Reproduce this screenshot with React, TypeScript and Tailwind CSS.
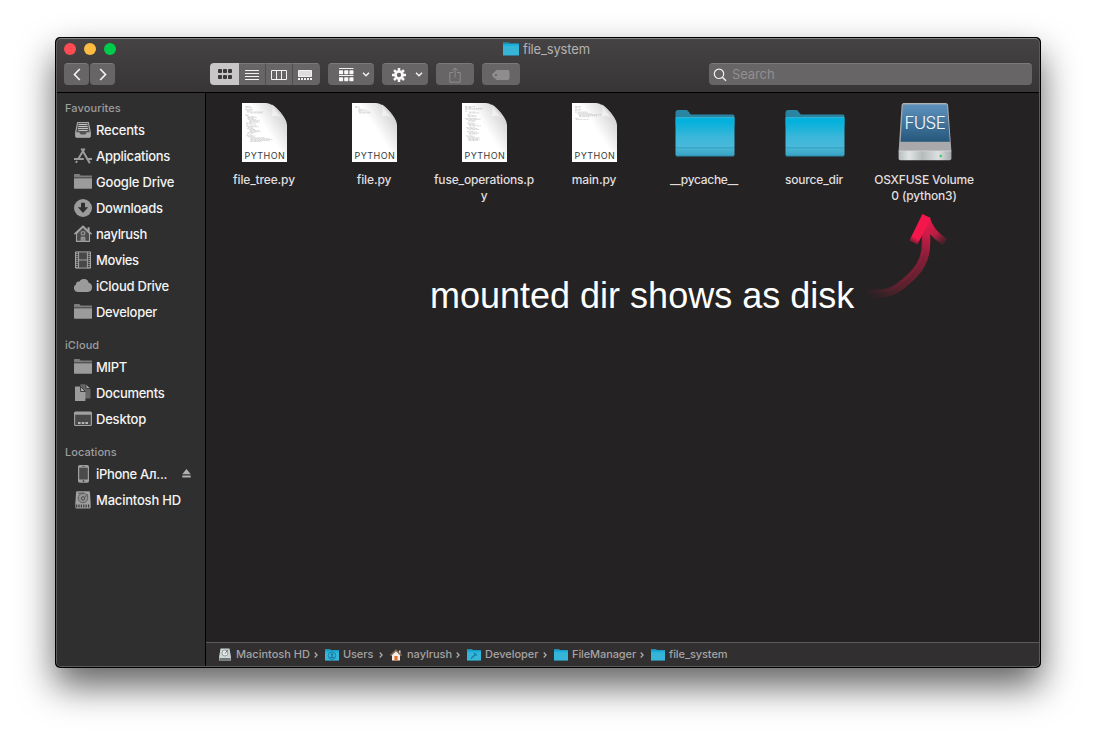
import type { ReactNode } from "react";

const GREY = "#9b9b9b";

function SmallFolder({ glyph, className = "h-[14px] w-[14px]" }: { glyph?: "user" | "tool"; className?: string }) {
  return (
    <svg viewBox="0 0 14 14" preserveAspectRatio="none" className={className}>
      <path d="M0 1h5l1 1h8V12.600H0z" fill="#258ba9" />
      <path d="M0 3h14V12.400H0z" fill="#36b5d9" />
      <path d="M0 2.600h14v1.800H0z" fill="#17b0df" />
      {glyph === "user" && (
        <g stroke="#157fa4" fill="none">
          <circle cx="7" cy="7.600" r="3.800" strokeWidth=".9" />
          <circle cx="7" cy="6.600" r="1.400" fill="#157fa4" stroke="none" />
          <path d="M4.500 10.200c.6-1.800 4.400-1.800 5 0" fill="#157fa4" />
        </g>
      )}
      {glyph === "tool" && <path d="M4 10.600l5-4.600M7 5l3 2.500" stroke="#157fa4" strokeWidth="1.300" fill="none" />}
    </svg>
  );
}

function SideFolder() {
  return (
    <svg viewBox="0 0 18 18" className="h-[18px] w-[18px]">
      <path d="M0 1.600q0-.6.6-.6H5.400l1.200 1.500H17.400q.6 0 .6.600V4.400H0z" fill="#7d7d7d" />
      <path d="M0 5.200h18v9.900q0 .6-.6.6H.6q-.6 0-.6-.6z" fill={GREY} />
    </svg>
  );
}

const icons: Record<string, ReactNode> = {
  recents: (
    <svg viewBox="0 0 18 18" className="h-[18px] w-[18px]">
      <path d="M3.600 1.500h10.800l1.900 9.600v4.200q0 .9-.9.9H2.600q-.9 0-.9-.9v-4.200z" fill="#555" stroke="#a8a8a8" strokeWidth="1.100" />
      <path d="M1.700 11.200h3.600q.6 2.200 2 2.200h3.400q1.400 0 2-2.200h3.600v4.100q0 .9-.9.9H2.600q-.9 0-.9-.9z" fill="#a8a8a8" />
      <path d="M4.600 3.500h8.800M4.300 5.500h9.400M4 7.500h10M4.500 9.500h9" stroke="#c0c0c0" strokeWidth="1" />
    </svg>
  ),
  apps: (
    <svg viewBox="0 0 18 18" className="h-[18px] w-[18px]" stroke={GREY} fill="none">
      <path d="M10.600 1.400L4.200 12M7.400 1.400L15 14.800M3 14l-1 1.900M15 14.800l.8 1.400" strokeWidth="2" />
      <path d="M0 12h9.800M12.600 12H18" strokeWidth="1.800" />
    </svg>
  ),
  folder: <SideFolder />,
  downloads: (
    <svg viewBox="0 0 18 18" className="h-[18px] w-[18px]">
      <circle cx="9" cy="9" r="9" fill={GREY} />
      <path d="M7 3.800h4v4.400h3.200L9 13.900 3.800 8.200H7z" fill="#303030" />
    </svg>
  ),
  home: (
    <svg viewBox="0 0 18 18" className="h-[18px] w-[18px]" fill="none" stroke="#a3a3a3">
      <path d="M2.500 8.500V16.400h13V8.500L9 2.200z" fill="#4a4a4a" strokeWidth="1.100" />
      <path d="M.4 9.200L9 1.300l8.600 7.900" strokeWidth="1.500" />
      <path d="M14.600 2.200v4" strokeWidth="2" />
      <path d="M7.300 6.800h3.400v3H7.300z" />
      <path d="M7 12h4v4.400H7z" fill="#8b8b8b" strokeWidth=".6" />
    </svg>
  ),
  movies: (
    <svg viewBox="0 0 18 18" className="h-[18px] w-[18px]">
      <path d="M1.500.9h15v16.200h-15z" fill="#484848" stroke="#a3a3a3" strokeWidth="1" />
      <path d="M4.600 1v16M13.400 1v16M4.600 9h8.800" stroke="#a3a3a3" strokeWidth="1" />
      <path d="M2.900 2v15M15.100 2v15" stroke="#a8a8a8" strokeWidth="1.200" strokeDasharray="1 1" />
    </svg>
  ),
  cloud: (
    <svg viewBox="0 0 18 18" className="h-[18px] w-[18px]">
      <path d="M4 15A4 4 0 0 1 2 7.500 3 3 0 0 1 5.400 4.600 4.700 4.700 0 0 1 14 5.600 4.400 4.400 0 0 1 18 10.600a4.400 4.400 0 0 1-4.200 4.400z" fill={GREY} />
      <circle cx="10.200" cy="6.400" r="4.400" fill={GREY} />
    </svg>
  ),
  documents: (
    <svg viewBox="0 0 18 18" className="h-[18px] w-[18px]">
      <path d="M6.400.3h5.400L16.500 4.500v10H6.400z" fill="#666" />
      <path d="M12 0v4.600h4.400z" fill="#a8a8a8" stroke="#303030" strokeWidth=".8" />
      <path d="M1 2.500h5.800l4.600 4.800v9.600H1z" fill={GREY} />
      <path d="M6.600 2.500v5h4.800z" fill="#b4b4b4" stroke="#303030" strokeWidth=".9" />
    </svg>
  ),
  desktop: (
    <svg viewBox="0 0 18 18" className="h-[18px] w-[18px]">
      <rect x=".6" y="2.100" width="16.800" height="13.400" rx="1" fill="#484848" stroke="#a3a3a3" strokeWidth="1.100" />
      <path d="M.6 2.200h16.800v2.500H.6z" fill="#a3a3a3" />
      <path d="M4 12h2.600v2H4zM7.700 12h2.600v2H7.700zM11.400 12H14v2h-2.600z" fill="#b4b4b4" />
    </svg>
  ),
  phone: (
    <svg viewBox="0 0 18 18" className="h-[18px] w-[18px]">
      <rect x="4" y=".1" width="11" height="17.600" rx="1.800" fill="#a0a0a0" />
      <path d="M5.200 2.700h8.600v11.800H5.200z" fill="#4b4b4b" />
      <circle cx="9.500" cy="16.100" r=".9" fill="#3a3a3a" />
      <path d="M7.900 1.400h3.200" stroke="#555" strokeWidth=".7" />
    </svg>
  ),
  disk: (
    <svg viewBox="0 0 18 18" className="h-[18px] w-[18px]">
      <path d="M3 .2h12q.8 0 .9.8l.8 11.700v3.900q0 .8-.8.8H2.100q-.8 0-.8-.8v-3.900L2.100 1Q2.200.2 3 .2z" fill="#a0a0a0" />
      <circle cx="9" cy="7" r="4.800" fill="#929292" stroke="#5a5a5a" strokeWidth=".9" />
      <circle cx="9" cy="7.400" r="1.700" fill="none" stroke="#4a4a4a" strokeWidth="1" />
      <path d="M10.400 6.500L14 3.200M4 2.200h6" stroke="#5a5a5a" strokeWidth="1" />
      <path d="M2.600 13.600v2.800M5 13.600v2.800M7.400 13.600v2.800M9.800 13.600v2.800M12.200 13.600v2.800M14.600 13.600v2.800" stroke="#404040" strokeWidth="1.300" />
    </svg>
  ),
};

type Item = { icon: string; label: string; track: string; eject?: boolean };
const sections: { title: string; track: string; items: Item[] }[] = [
  {
    title: "Favourites",
    track: "tracking-[0.1px]",
    items: [
      { icon: "recents", label: "Recents", track: "tracking-[-0.2px]" },
      { icon: "apps", label: "Applications", track: "tracking-[-0.26px]" },
      { icon: "folder", label: "Google Drive", track: "tracking-[-0.2px]" },
      { icon: "downloads", label: "Downloads", track: "tracking-[-0.3px]" },
      { icon: "home", label: "naylrush", track: "tracking-[-0.3px]" },
      { icon: "movies", label: "Movies", track: "tracking-[-0.35px]" },
      { icon: "cloud", label: "iCloud Drive", track: "tracking-[-0.25px]" },
      { icon: "folder", label: "Developer", track: "tracking-[-0.27px]" },
    ],
  },
  {
    title: "iCloud",
    track: "tracking-[0.1px]",
    items: [
      { icon: "folder", label: "MIPT", track: "tracking-[-0.3px]" },
      { icon: "documents", label: "Documents", track: "tracking-[-0.27px]" },
      { icon: "desktop", label: "Desktop", track: "tracking-[-0.2px]" },
    ],
  },
  {
    title: "Locations",
    track: "tracking-[0.05px]",
    items: [
      { icon: "phone", label: "iPhone Ал...", track: "tracking-[-0.3px]", eject: true },
      { icon: "disk", label: "Macintosh HD", track: "tracking-[-0.2px]" },
    ],
  },
];

function Sidebar() {
  return (
    <aside className="flex w-[150px] shrink-0 flex-col gap-[11px] border-r border-black bg-[#2f2f2f] pt-[6px]">
      {sections.map((s) => (
        <section key={s.title}>
          <h2 className={`h-[18px] pl-[9px] text-[11px] leading-[18px] font-medium text-[#9d9d9d] ${s.track}`}>{s.title}</h2>
          {s.items.map((i) => (
            <div key={i.label} className="flex h-[26px] items-center pl-[18px]">
              {icons[i.icon]}
              <span className={`ml-[4px] pt-[2px] whitespace-nowrap text-[13px] font-medium text-[#f4f4f4] ${i.track}`}>{i.label}</span>
              {i.eject && (
                <svg viewBox="0 0 9 9" className="mr-[14px] mb-px ml-auto h-[9px] w-[9px]">
                  <path d="M4.500 0L8.800 5.200H.2zM.3 6.600h8.400v1.900H.3z" fill="#b0b0b0" />
                </svg>
              )}
            </div>
          ))}
        </section>
      ))}
    </aside>
  );
}

const btn = "flex h-[22px] items-center justify-center border-t border-[#7b797a] bg-[#676566]";

function Chevron() {
  return (
    <svg viewBox="0 0 8 5" className="h-[5px] w-[8px]">
      <path d="M1 .8l3 3 3-3" fill="none" stroke="#f2f2f2" strokeWidth="1.500" />
    </svg>
  );
}

function Toolbar() {
  return (
    <div className="flex h-[22px] items-center">
      <div className="flex gap-px">
        <button className={`${btn} w-[25px] rounded-[4px]`}>
          <svg viewBox="0 0 8 13" className="h-[13px] w-[8px]">
            <path d="M6.800 1L1.500 6.500l5.300 5.500" fill="none" stroke="#f2f2f2" strokeWidth="1.700" />
          </svg>
        </button>
        <button className={`${btn} w-[25px] rounded-[4px]`}>
          <svg viewBox="0 0 8 13" className="h-[13px] w-[8px]">
            <path d="M1.200 1l5.300 5.500L1.200 12" fill="none" stroke="#f2f2f2" strokeWidth="1.700" />
          </svg>
        </button>
      </div>
      <div className="ml-[95px] flex overflow-hidden rounded-[4px]">
        <div className="flex h-[22px] w-[29px] items-center justify-center bg-[#c8c6c7]">
          <svg viewBox="0 0 14 10" className="h-[10px] w-[14px]" fill="#3a3839">
            {[0, 5, 10].map((x) => [0, 6].map((y) => <rect key={`${x}-${y}`} x={x} y={y} width="4" height="4" rx=".9" />))}
          </svg>
        </div>
        <div className={`${btn} w-[27px] border-r border-r-[#504e4f]`}>
          <svg viewBox="0 0 14 10" className="h-[10px] w-[14px]">
            <path d="M0 .5h14M0 3.500h14M0 6.500h14M0 9.500h14" stroke="#f2f2f2" />
          </svg>
        </div>
        <div className={`${btn} w-[27px] border-r border-r-[#504e4f]`}>
          <svg viewBox="0 0 16 10" className="h-[10px] w-[16px]">
            <path d="M.5.5h15v9H.5zM5.500 0v10M10.500 0v10" stroke="#f2f2f2" fill="none" />
          </svg>
        </div>
        <div className={`${btn} w-[27px] justify-start! pl-[5px]`}>
          <svg viewBox="0 0 14 10" className="h-[10px] w-[14px]">
            <path d="M.5.5h13v6H.5z" stroke="#f2f2f2" fill="#dedddd" />
            <path d="M0 9h14" stroke="#f2f2f2" strokeWidth="2" strokeDasharray="2 1" strokeDashoffset="0" />
          </svg>
        </div>
      </div>
      <div className={`${btn} ml-[8px] w-[46px] gap-[8px] rounded-[4px] pl-[6px]`}>
        <svg viewBox="0 0 15 14" className="h-[14px] w-[15px]">
          <path d="M0 .5h14.500M0 7.500h14.500" stroke="#f2f2f2" />
          {[0, 5.200, 10.400].map((x) => [2.200, 9.200].map((y) => <rect key={`${x}-${y}`} x={x} y={y} width="4.100" height="4" rx=".7" fill="#f8f8f8" />))}
        </svg>
        <Chevron />
      </div>
      <div className={`${btn} ml-[8px] w-[46px] gap-[9px] rounded-[4px] pl-[5px]`}>
        <svg viewBox="0 0 14 14" className="h-[14px] w-[14px]">
          <g stroke="#f8f8f8" strokeWidth="2.500">
            <path d="M7 0v3M7 11v3M0 7h3M11 7h3M2.050 2.050l2.200 2.200M9.800 9.800l2.200 2.200M11.950 2.050l-2.200 2.200M4.200 9.800L2 12" />
          </g>
          <circle cx="7" cy="7" r="3.500" stroke="#f8f8f8" strokeWidth="2.700" fill="none" />
        </svg>
        <Chevron />
      </div>
      <div className={`${btn} ml-[8px] w-[38px] rounded-[4px]`}>
        <svg viewBox="0 0 12 16" className="h-[16px] w-[12px]" fill="none" stroke="#8f8d8e">
          <path d="M4 5.500H.8v9.700h10.400V5.500H8M6 10.500V1M3.400 3.500L6 .9l2.600 2.600" />
        </svg>
      </div>
      <div className={`${btn} ml-[8px] w-[38px] rounded-[4px]`}>
        <svg viewBox="0 0 18 10" className="h-[10px] w-[18px]">
          <path fillRule="evenodd" d="M4.600 0H15.500q2 0 2 2v6q0 2-2 2H4.600L.5 6.200Q-.3 5 .5 3.800zM4 4a1.100 1.100 0 1 0 .01 2.200A1.100 1.100 0 0 0 4 4z" fill="#8f8d8e" />
        </svg>
      </div>
      <div className={`${btn} ml-auto w-[323px] justify-start! rounded-[4px] pl-[4px]`}>
        <svg viewBox="0 0 14 14" className="h-[14px] w-[14px]" fill="none" stroke="#f0f0f0" strokeWidth="1.200">
          <circle cx="6" cy="5.800" r="4.700" />
          <path d="M9.400 9.200L13 12.800" strokeWidth="1.500" />
        </svg>
        <span className="ml-[5px] text-[13px] tracking-[-0.1px] text-[#929091]">Search</span>
      </div>
    </div>
  );
}

// Each entry is [indent, length] of one line in the page preview.
const previews: Record<string, number[][]> = {
  tree: [[0, 5], [1, 6], [0, 0], [0, 8], [1, 7], [2, 4], [2, 16], [5, 12], [0, 0], [0, 4], [1, 3], [2, 8], [3, 9], [2, 7], [3, 8], [5, 10], [4, 9], [4, 11], [1, 6], [1, 10], [0, 0], [1, 11], [2, 12], [3, 5], [2, 7], [4, 6], [5, 9], [5, 11], [3, 9], [2, 7], [0, 0], [1, 6], [2, 8], [3, 7], [5, 15], [6, 19], [5, 23], [6, 19], [5, 12]],
  file: [[0, 3], [0, 5], [0, 0], [3, 5], [4, 8], [3, 4], [4, 11], [4, 12]],
  fuse: [[0, 10], [0, 7], [0, 18], [0, 16], [0, 0], [0, 3], [4, 7], [4, 10], [0, 0], [2, 4], [3, 9], [3, 8], [0, 0], [0, 13], [1, 15], [3, 8], [4, 6], [0, 0], [2, 7], [3, 8], [4, 6], [4, 12], [0, 0], [1, 9], [2, 11], [4, 10], [0, 0], [2, 7], [3, 9], [4, 10], [4, 8], [0, 0], [1, 7], [2, 8], [4, 11], [3, 10], [3, 12], [4, 9]],
  main: [[0, 6], [0, 5], [0, 0], [0, 7], [0, 5], [0, 0], [0, 12], [3, 10], [2, 15], [4, 24], [4, 18], [4, 11], [0, 0], [0, 4], [1, 13]],
};

function PyFile({ preview }: { preview: string }) {
  return (
    <svg viewBox="0 0 64 64" className="h-[64px] w-[64px]">
      <defs>
        <linearGradient id={`p-${preview}`} x1=".15" y1=".65" x2=".8" y2=".1">
          <stop offset=".5" stopColor="#fff" />
          <stop offset="1" stopColor="#d6d6d6" />
        </linearGradient>
        <linearGradient id={`c-${preview}`} x1="0" y1="1" x2=".7" y2=".3">
          <stop offset="0" stopColor="#fff" />
          <stop offset=".6" stopColor="#eee" />
          <stop offset="1" stopColor="#a9a9a9" />
        </linearGradient>
      </defs>
      <path d="M10 2h24c7 0 20 13 21 22v37H10z" fill={`url(#p-${preview})`} />
      <g stroke="#777" strokeWidth=".6" opacity=".45">
        {previews[preview].map(([a, b], i) => (
          <path key={i} d={`M${13 + a} ${5.500 + i * 0.920}h${b}`} strokeDasharray="2 .5 1.200 .4" />
        ))}
      </g>
      <path d="M39.500 3.200C41 7 41 12 39.700 15.200 44 13.800 51 15.500 54.900 22 52 15 46 7 39.500 3.200z" fill={`url(#c-${preview})`} />
      <text x="32.800" y="58" textAnchor="middle" fontSize="9" letterSpacing=".4" fill="#3a3a3a" fontFamily="Inter, sans-serif">
        PYTHON
      </text>
    </svg>
  );
}

function BigFolder() {
  return (
    <svg viewBox="0 0 64 64" className="h-[64px] w-[64px]">
      <defs>
        <linearGradient id="folder" x1="0" y1="0" x2="0" y2="1">
          <stop offset="0" stopColor="#00b2de" />
          <stop offset=".12" stopColor="#05b0dc" />
          <stop offset=".5" stopColor="#3bb7da" />
          <stop offset=".76" stopColor="#49b9da" />
          <stop offset=".77" stopColor="#3aa6c7" />
          <stop offset=".82" stopColor="#45b2d2" />
          <stop offset="1" stopColor="#38a2c3" />
        </linearGradient>
      </defs>
      <g transform="translate(.8 -.4)">
        <path d="M2.700 12q0-2.600 2.200-2.600h8.900c1.700 0 3.200 4.600 5.200 4.600H60q1.700 0 1.700 1.700V25h-59z" fill="#2a85a2" />
        <path d="M2.700 18q0-1.200 1.200-1.200h56.600q1.200 0 1.200 1.200v36q0 1.700-1.700 1.700H4.400q-1.700 0-1.700-1.700z" fill="url(#folder)" />
        <path d="M3 17.100h58.400" stroke="#55c4e2" strokeWidth=".6" />
        <path d="M3 55.400h58.400" stroke="#23809d" strokeWidth=".7" />
      </g>
    </svg>
  );
}

function FuseDisk() {
  return (
    <svg viewBox="0 0 64 64" className="h-[64px] w-[64px]">
      <defs>
        <linearGradient id="screen" x1="0" y1="0" x2="0" y2="1">
          <stop offset="0" stopColor="#5e92bd" />
          <stop offset="1" stopColor="#26577c" />
        </linearGradient>
        <linearGradient id="base" x1="0" y1="0" x2="1" y2="0">
          <stop offset="0" stopColor="#b7bcbc" />
          <stop offset=".2" stopColor="#e0e4e4" />
          <stop offset=".45" stopColor="#b5babb" />
          <stop offset=".75" stopColor="#dce0e0" />
          <stop offset="1" stopColor="#a5aaaa" />
        </linearGradient>
      </defs>
      <g transform="translate(.8 .2)">
        <path d="M10.500 2.100h43q1.700 0 1.800 1.700L58.600 50H5.800L8.800 3.800Q9 2.100 10.500 2.100z" fill="#a9a9ab" />
        <path d="M11 3h42.200q1 0 1 1L57 40.600H7.800L10 4q0-1 1-1z" fill="url(#screen)" />
        <path d="M10.200 2.500h43.200" stroke="#c4ccd1" strokeWidth=".8" />
        <path d="M5.800 49.700h52.800v7.600q0 1.700-1.700 1.700H7.500q-1.700 0-1.700-1.700z" fill="url(#base)" />
        <path d="M6 49.700h52.500" stroke="#dde1e1" strokeWidth=".6" />
        <circle cx="48" cy="54.800" r="1.300" fill="#42cf62" />
      </g>
      <text x="32.800" y="28" textAnchor="middle" fontSize="17" letterSpacing="-.7" fontWeight="300" fill="#f4f8fb" fontFamily="Inter, sans-serif">
        FUSE
      </text>
    </svg>
  );
}

const files: { icon: ReactNode; lines: string[]; track: string }[] = [
  { icon: <PyFile preview="tree" />, lines: ["file_tree.py"], track: "tracking-[-0.14px]" },
  { icon: <PyFile preview="file" />, lines: ["file.py"], track: "tracking-[-0.14px]" },
  { icon: <PyFile preview="fuse" />, lines: ["fuse_operations.p", "y"], track: "tracking-[-0.18px]" },
  { icon: <PyFile preview="main" />, lines: ["main.py"], track: "tracking-[-0.16px]" },
  { icon: <BigFolder />, lines: ["__pycache__"], track: "tracking-[-0.3px]" },
  { icon: <BigFolder />, lines: ["source_dir"], track: "tracking-[-0.2px]" },
  { icon: <FuseDisk />, lines: ["OSXFUSE Volume", "0 (python3)"], track: "tracking-[-0.2px]" },
];

function Arrow() {
  return (
    <svg viewBox="0 0 90 90" className="absolute top-[117px] left-[654px] h-[90px] w-[90px]" fill="none">
      <defs>
        <linearGradient id="shaft" gradientUnits="userSpaceOnUse" x1="6" y1="84" x2="66" y2="15">
          <stop offset="0" stopColor="#8c2038" stopOpacity="0" />
          <stop offset=".3" stopColor="#8c2038" stopOpacity=".5" />
          <stop offset=".7" stopColor="#a81d40" stopOpacity=".7" />
          <stop offset="1" stopColor="#e51a4c" />
        </linearGradient>
        <linearGradient id="left" gradientUnits="userSpaceOnUse" x1="66" y1="8" x2="52" y2="34">
          <stop offset="0" stopColor="#f5174c" />
          <stop offset=".75" stopColor="#f5174c" />
          <stop offset="1" stopColor="#f5174c" stopOpacity=".2" />
        </linearGradient>
        <linearGradient id="right" gradientUnits="userSpaceOnUse" x1="66" y1="10" x2="86" y2="32">
          <stop offset="0" stopColor="#ee194c" />
          <stop offset=".6" stopColor="#b51d42" />
          <stop offset="1" stopColor="#8c2038" stopOpacity=".2" />
        </linearGradient>
      </defs>
      <path d="M6 83.500C22 84 30 85 44 73 59 61 66 50 66 33V14" stroke="url(#shaft)" strokeWidth="8.500" />
      <path d="M10 81.500C26 82 32 81 43 71 57 60 64 48 64 33V14" stroke="url(#shaft)" strokeWidth="1.500" opacity=".6" />
      <path d="M66 8c3 11 9 18 19 24" stroke="url(#right)" strokeWidth="7.500" />
      <path d="M66.500 6L53.500 32.500" stroke="url(#left)" strokeWidth="9" />
    </svg>
  );
}

function PathBar() {
  const hd = (
    <svg viewBox="0 0 12 14" className="h-[14px] w-[12px]">
      <path d="M1.500.4h9L12 9.600v3H0v-3z" fill="#cfd6d6" />
      <path d="M.4 10h11.200v2.300H.4z" fill="#70797a" />
      <circle cx="6" cy="5" r="3" fill="#e9eeee" stroke="#7d8687" strokeWidth=".8" />
      <path d="M6 5.600l3-4" stroke="#6a7374" />
    </svg>
  );
  const house = (
    <svg viewBox="0 0 12 14" className="h-[14px] w-[12px]">
      <path d="M2 6.500L6 3l4 3.500v6H2z" fill="#f1eee9" />
      <path d="M9 2.500h1.500v3H9z" fill="#ddd" />
      <path d="M.4 7.600L6 2.200l5.600 5.400" fill="none" stroke="#8e6e56" strokeWidth="1.500" />
      <path d="M4.400 8h3.200v4.500H4.400z" fill="#e8722c" />
    </svg>
  );
  const crumbs = [
    { icon: hd, label: "Macintosh HD", w: "w-[106px]", gap: "ml-[5px]", track: "tracking-[0px]" },
    { icon: <SmallFolder glyph="user" />, label: "Users", w: "w-[65px]", gap: "ml-[4px]", track: "tracking-[-0.1px]" },
    { icon: house, label: "naylrush", w: "w-[77px]", gap: "ml-[5px]", track: "tracking-[-0.02px]" },
    { icon: <SmallFolder glyph="tool" />, label: "Developer", w: "w-[87px]", gap: "ml-[4px]", track: "tracking-[-0.02px]" },
    { icon: <SmallFolder />, label: "FileManager", w: "w-[97px]", gap: "ml-[4px]", track: "tracking-[-0.1px]" },
    { icon: <SmallFolder />, label: "file_system", w: "w-[97px]", gap: "ml-[4px]", track: "tracking-[-0.08px]" },
  ];
  return (
    <footer className="flex h-[25px] shrink-0 items-center border-t border-[#5b595a] bg-[#312f30] pb-px pl-[13px]">
      {crumbs.map((c, i) => (
        <div key={c.label} className={`flex shrink-0 items-center ${c.w}`}>
          {c.icon}
          <span className={`whitespace-nowrap text-[11px] font-medium text-[#a5a3a4] ${c.gap} ${c.track}`}>{c.label}</span>
          {i < crumbs.length - 1 && (
            <svg viewBox="0 0 4 6" className="mr-[7px] ml-auto h-[6px] w-[4px]">
              <path d="M.7.5L3.100 3 .7 5.500" fill="none" stroke="#b0aeaf" strokeWidth="1.200" />
            </svg>
          )}
        </div>
      ))}
    </footer>
  );
}

export default function App() {
  return (
    <div className="h-[741px] w-[1096px] overflow-hidden bg-white pt-[37px] pl-[55px] font-['Inter',sans-serif]">
      <div className="flex h-[631px] w-[986px] rounded-[5px] bg-black p-px shadow-[0_18px_36px_rgba(0,0,0,0.62)]">
        <div className="relative flex min-w-0 flex-1 flex-col overflow-hidden rounded-[5px] bg-[#242223]">
          <header className="h-[55px] shrink-0 border-b border-black bg-linear-to-b from-[#454344] to-[#373536] px-[8px]">
            <div className="flex h-[22px] items-center gap-[8px]">
              <span className="h-[12px] w-[12px] rounded-full bg-[#ff4b51]" />
              <span className="h-[12px] w-[12px] rounded-full bg-[#fdbb42]" />
              <span className="h-[12px] w-[12px] rounded-full bg-[#00cc4b]" />
              <div className="ml-[379px] flex items-center">
                <SmallFolder className="h-[16px] w-[16px]" />
                <span className="ml-[4px] pt-[2px] text-[13px] tracking-[-0.17px] text-[#b4b2b3]">file_system</span>
              </div>
            </div>
            <div className="pt-[3px]">
              <Toolbar />
            </div>
          </header>
          <div className="flex min-h-0 flex-1">
            <Sidebar />
            <div className="flex min-w-0 flex-1 flex-col">
              <main className="relative min-h-0 flex-1">
                <div className="flex pt-[8px] pl-[3px]">
                  {files.map((f) => (
                    <div key={f.lines[0]} className="flex w-[110px] flex-col items-center">
                      {f.icon}
                      <div className={`mt-[7px] text-center text-[12px] leading-[16px] font-medium whitespace-nowrap text-[#e0dedf] ${f.track}`}>
                        {f.lines.map((l) => (
                          <div key={l}>{l}</div>
                        ))}
                      </div>
                    </div>
                  ))}
                </div>
                <p className="absolute top-[182px] left-[224px] font-['Liberation_Sans',sans-serif] text-[36px] leading-[42px] whitespace-nowrap text-white">
                  mounted dir shows as disk
                </p>
                <Arrow />
              </main>
              <PathBar />
            </div>
          </div>
          <div className="pointer-events-none absolute inset-0 rounded-[5px] border border-t-[#858384] border-r-[#5c5a5b] border-b-[#5c5a5b] border-l-[#5c5a5b]" />
        </div>
      </div>
    </div>
  );
}
